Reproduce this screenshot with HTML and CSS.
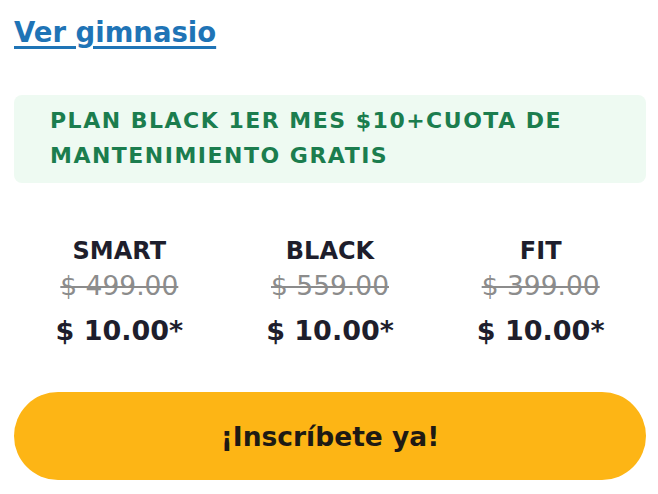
FILE: index.html
```html
<!DOCTYPE html>
<html lang="es">
<head>
  <meta charset="utf-8">
  <title>Plan Black</title>
  <link rel="stylesheet" href="styles.css">
</head>
<body>
  <div class="card">
    <a class="gym-link" href="#">Ver gimnasio</a>

    <div class="promo">PLAN BLACK 1ER MES $10+CUOTA DE MANTENIMIENTO GRATIS</div>

    <div class="plans">
      <div class="plan">
        <div class="plan-name">SMART</div>
        <div class="plan-old">$ 499.00</div>
        <div class="plan-price">$ 10.00*</div>
      </div>
      <div class="plan">
        <div class="plan-name">BLACK</div>
        <div class="plan-old">$ 559.00</div>
        <div class="plan-price">$ 10.00*</div>
      </div>
      <div class="plan">
        <div class="plan-name">FIT</div>
        <div class="plan-old">$ 399.00</div>
        <div class="plan-price">$ 10.00*</div>
      </div>
    </div>

    <button class="signup">¡Inscríbete ya!</button>
  </div>
</body>
</html>
```

FILE: styles.css
```css
:root {
  --blue: #1f74b6;
  --green: #1b7d4e;
  --green-bg: #eefaf2;
  --ink: #1e1e2c;
  --grey: #8c8c8c;
  --yellow: #fdb515;
  --font: "DejaVu Sans";
}

body {
  margin: 0;
  background: #fff;
  font-family: var(--font), sans-serif;
}

.card {
  display: flex;
  flex-direction: column;
  padding: 14px 12px 0 14px;
}

.gym-link {
  align-self: flex-start;
  color: var(--blue);
  font-size: 27.5px;
  font-weight: 700;
  line-height: 36px;
  text-decoration-thickness: 3px;
  text-underline-offset: 4px;
}

.promo {
  margin-top: 45px;
  padding: 8px 36px 10px;
  background: var(--green-bg);
  color: var(--green);
  font-size: 22px;
  font-weight: 700;
  line-height: 35px;
  letter-spacing: 1.5px;
  border-radius: 8px;
}

.plans {
  display: grid;
  grid-template-columns: repeat(3, 1fr);
  margin-top: 52px;
  text-align: center;
}

.plan-name {
  color: var(--ink);
  font-size: 24px;
  font-weight: 700;
  line-height: 32px;
}

.plan-old {
  margin-top: 4px;
  color: var(--grey);
  font-size: 26.5px;
  line-height: 30px;
  text-decoration: line-through;
  text-decoration-thickness: 2px;
}

.plan-price {
  margin-top: 13px;
  color: var(--ink);
  font-size: 27px;
  font-weight: 700;
  line-height: 34px;
}

.signup {
  margin-top: 44px;
  height: 88px;
  border: 0;
  border-radius: 44px;
  background: var(--yellow);
  color: #1e1a14;
  font-family: var(--font), sans-serif;
  font-size: 26.5px;
  font-weight: 700;
}
```
